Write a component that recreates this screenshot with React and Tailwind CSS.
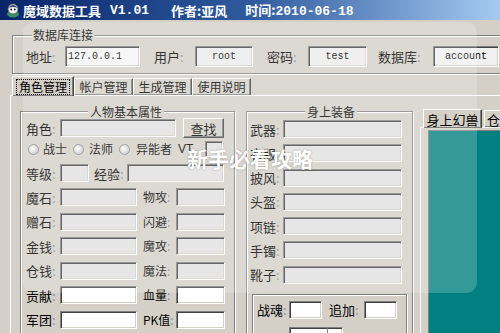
import React from "react";

const sunken =
  "border border-t-[#808080] border-l-[#808080] border-b-white border-r-white shadow-[inset_1px_1px_0_#404040,inset_-1px_-1px_0_#d4d0c8]";
const etched = "border border-[#808080] shadow-[inset_1px_1px_0_#ffffff,1px_1px_0_#ffffff]";
const raised =
  "border border-t-white border-l-white border-b-[#404040] border-r-[#404040] shadow-[inset_-1px_-1px_0_#808080]";

function Field({ w, bg = "bg-[#e0e0e0]", h = "h-[18px]", className = "", children }) {
  return (
    <div className={`${sunken} ${w} ${h} ${bg} shrink-0 flex items-center overflow-hidden ${className}`}>
      {children}
    </div>
  );
}

function Label({ text, w, size = "text-[13px]", className = "" }) {
  return (
    <span className={`${w} shrink-0 whitespace-nowrap ${size} ${className}`}>
      {text}
      <span className="text-[#8c8c8c]">:</span>
    </span>
  );
}

function Radio({ className = "" }) {
  return (
    <span
      className={`block w-[11px] h-[11px] rounded-full shrink-0 border border-[#8a8a8a] bg-[radial-gradient(circle_at_40%_40%,#ffffff,#b4b4b4)] ${className}`}
    />
  );
}

function AppIcon() {
  return (
    <svg width="16" height="16" viewBox="0 0 16 16">
      <ellipse cx="8" cy="12" rx="6" ry="3.5" fill="#3a8f6a" />
      <circle cx="8" cy="7" r="5" fill="#f2f2f2" stroke="#555" strokeWidth="0.8" />
      <path d="M3 6 Q8 0 13 6 Q8 4 3 6Z" fill="#2d3f6b" />
      <circle cx="6.2" cy="7.5" r="0.9" fill="#222" />
      <circle cx="9.8" cy="7.5" r="0.9" fill="#222" />
    </svg>
  );
}

const pairs = [
  ["魔石", "物攻", false],
  ["赠石", "闪避", false],
  ["金钱", "魔攻", false],
  ["仓钱", "魔法", false],
  ["贡献", "血量", true],
  ["军团", "PK值", true],
];

const gear = ["武器", "衣服", "披风", "头盔", "项链", "手镯", "靴子"];

export default function App() {
  return (
    <div className="relative w-[500px] h-[333px] overflow-hidden bg-[#d4d0c8] font-['Noto_Sans_CJK_SC',sans-serif] text-[12px] leading-none text-black">
      {/* title bar */}
      <div className="h-[20px] flex items-center pl-[5px] bg-gradient-to-r from-[#0a246a] via-[#2f5a9e] to-[#a6caf0] text-white font-bold text-[13px] whitespace-nowrap">
        <AppIcon />
        <span className="ml-[2px]">魔域数据工具</span>
        <span className="ml-[9px] font-['Liberation_Mono',monospace]">V1.01</span>
        <span className="ml-[22px]">作者:亚风</span>
        <span className="ml-[18px]">
          时间:<span className="font-['Liberation_Mono',monospace]">2010-06-18</span>
        </span>
      </div>

      {/* database group */}
      <fieldset className={`ml-[12px] mt-[8px] w-[500px] ${etched} pl-[13px] pb-[6px]`}>
        <legend className="ml-[6px] px-[1px] bg-[#d4d0c8] text-[12px] leading-[14px]">数据库连接</legend>
        <div className="flex items-center h-[21px] mt-[4px]">
          <Label text="地址" w="w-[39px]" />
          <Field w="w-[75px]" h="h-[21px]" bg="bg-[#f4f4f4]" className="pl-[2px]">
            <span className="font-['Liberation_Mono',monospace] text-[10px]">127.0.0.1</span>
          </Field>
          <Label text="用户" w="w-[41px]" className="ml-[14px]" />
          <Field w="w-[58px]" h="h-[21px]" bg="bg-[#ececec]" className="justify-center">
            <span className="font-['Liberation_Mono',monospace] text-[10px]">root</span>
          </Field>
          <Label text="密码" w="w-[41px]" className="ml-[14px]" />
          <Field w="w-[59px]" h="h-[21px]" bg="bg-[#ececec]" className="justify-center">
            <span className="font-['Liberation_Mono',monospace] text-[10px]">test</span>
          </Field>
          <Label text="数据库" w="w-[55px]" className="ml-[11px]" />
          <Field w="w-[66px]" h="h-[21px]" bg="bg-[#f0f0f0]" className="justify-center">
            <span className="font-['Liberation_Mono',monospace] text-[10px]">account</span>
          </Field>
        </div>
      </fieldset>

      {/* tabs */}
      <div className="ml-[12px] mt-[2px] h-[19px] flex items-end text-[12px]">
        <div className={`relative z-10 -mb-px w-[62px] h-[20px] bg-[#d4d0c8] ${raised} border-b-0 flex items-center justify-center`}>
          <span className="outline-1 outline-dotted outline-black px-[2px] py-[1px]">角色管理</span>
        </div>
        {["帐户管理", "生成管理", "使用说明"].map((t) => (
          <div key={t} className={`w-[59px] h-[17px] ${raised} border-b-0 flex items-center justify-center`}>
            {t}
          </div>
        ))}
      </div>

      {/* tab page */}
      <div className="ml-[10px] h-[240px] border-t border-l border-white flex pl-[9px] pt-[9px]">
        {/* basic attributes */}
        <fieldset className={`w-[215px] h-[250px] shrink-0 ${etched} pl-[5px] pr-[8px]`}>
          <legend className="mx-auto px-[2px] bg-[#d4d0c8] text-[12px] leading-[13px]">人物基本属性</legend>
          <div className="flex flex-col">
            <div className="flex items-center h-[20px]">
              <Label text="角色" w="w-[34px]" />
              <Field w="w-[116px]" />
              <div className={`ml-[7px] w-[41px] h-[20px] shrink-0 ${raised} flex items-center justify-center text-[13px]`}>
                查找
              </div>
            </div>
            <div className="flex items-center h-[18px] mt-[2px] text-[12px] whitespace-nowrap">
              <Radio className="ml-[2px]" />
              <span className="ml-[4px] shrink-0">战士</span>
              <Radio className="ml-[6px]" />
              <span className="ml-[5px] shrink-0">法师</span>
              <Radio className="ml-[6px]" />
              <span className="ml-[6px] shrink-0">异能者</span>
              <span className="ml-[6px] shrink-0 font-['Liberation_Sans',sans-serif]">VT</span>
              <Field w="w-[18px]" h="h-[16px]" className="ml-[12px]" />
            </div>
            <div className="flex items-center h-[18px] mt-[6px]">
              <Label text="等级" w="w-[34px]" />
              <Field w="w-[29px]" />
              <Label text="经验" w="w-[33px]" className="ml-[5px]" />
              <Field w="w-[97px]" />
            </div>
            {pairs.map(([a, b, white], i) => (
              <div key={a} className={`flex items-center h-[18px] ${i === 0 ? "mt-[6px]" : "mt-[6.5px]"}`}>
                <Label text={a} w="w-[34px]" />
                <Field w="w-[77px]" bg={white ? "bg-white" : "bg-[#e0e0e0]"} />
                <Label text={b} w="w-[33px]" size="text-[12px]" className="ml-[6px]" />
                <Field w="w-[49px]" bg={white ? "bg-white" : "bg-[#e0e0e0]"} />
              </div>
            ))}
          </div>
        </fieldset>

        {/* equipment */}
        <fieldset className={`ml-[11px] w-[167px] h-[250px] shrink-0 ${etched} pl-[3px]`}>
          <legend className="mx-auto px-[2px] bg-[#d4d0c8] text-[12px] leading-[13px]">身上装备</legend>
          <div className="flex flex-col gap-[6.3px] mt-[2px]">
            {gear.map((g) => (
              <div key={g} className="flex items-center h-[18px]">
                <Label text={g} w="w-[33px]" />
                <Field w="w-[119px]" />
              </div>
            ))}
          </div>
          <div className={`ml-[2px] mt-[10px] w-[155px] h-[60px] ${etched} pl-[4px] pt-[6px]`}>
            <div className="flex items-center h-[18px]">
              <Label text="战魂" w="w-[32px]" />
              <Field w="w-[33px]" bg="bg-white" />
              <Label text="追加" w="w-[35px]" className="ml-[7px]" />
              <Field w="w-[33px]" bg="bg-white" />
            </div>
            <div className="flex items-center h-[18px] mt-[8px] pl-[32px]">
              <Field w="w-[54px]" bg="bg-white" className="justify-end">
                <div className="w-[15px] h-full border-l border-[#808080]" />
              </Field>
            </div>
          </div>
        </fieldset>

        {/* pet tab control */}
        <div className="ml-[7px] mt-[4px] flex-1 flex flex-col">
          <div className="h-[20px] flex items-end pl-[3px] text-[13px]">
            <div className={`relative z-10 -mb-px w-[59px] h-[19px] bg-[#d4d0c8] ${raised} border-b-0 flex items-center justify-center`}>
              身上幻兽
            </div>
            <div className={`ml-[2px] w-[30px] h-[17px] ${raised} border-b-0 flex items-center pl-[2px]`}>仓</div>
          </div>
          <div className="flex-1 border-t border-l border-white pl-[7px] pt-[2px]">
            <div className="h-[220px] bg-[#008080] border-t border-l border-[#808080]" />
          </div>
        </div>
      </div>

      {/* translucent overlay */}
      <div className="absolute left-[23px] top-[22px] w-[454px] h-[271px] rounded-[11px] bg-white/20 flex items-center justify-center pt-[2px]">
        <span className="text-white font-bold text-[21px] [text-shadow:0_0_2px_rgba(0,0,0,0.35)]">新手必看攻略</span>
      </div>
    </div>
  );
}
